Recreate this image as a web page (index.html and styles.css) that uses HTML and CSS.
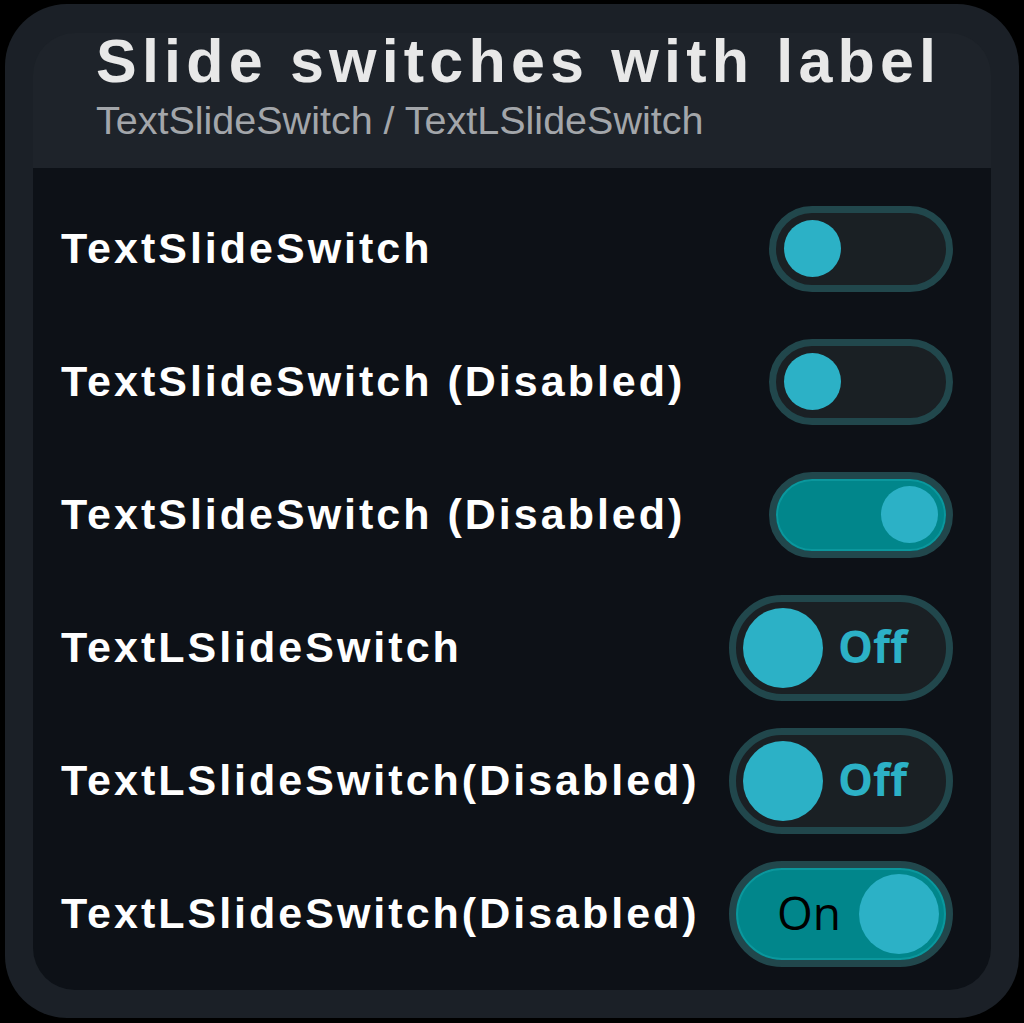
FILE: index.html
```html
<!DOCTYPE html>
<html lang="en">
<head>
<meta charset="utf-8">
<title>Slide switches with label</title>
<link rel="stylesheet" href="styles.css">
</head>
<body>
<div class="card">
  <div class="panel">
    <header class="header">
      <h1 class="title">Slide switches with label</h1>
      <p class="subtitle">TextSlideSwitch / TextLSlideSwitch</p>
    </header>
    <main class="body">
      <div class="row">
        <span class="label">TextSlideSwitch</span>
        <span class="sw sw-small"><span class="knob"></span></span>
      </div>
      <div class="row">
        <span class="label">TextSlideSwitch (Disabled)</span>
        <span class="sw sw-small"><span class="knob"></span></span>
      </div>
      <div class="row">
        <span class="label">TextSlideSwitch (Disabled)</span>
        <span class="sw sw-small on"><span class="knob"></span></span>
      </div>
      <div class="row">
        <span class="label">TextLSlideSwitch</span>
        <span class="sw sw-large"><span class="knob"></span><span class="state">Off</span></span>
      </div>
      <div class="row">
        <span class="label">TextLSlideSwitch(Disabled)</span>
        <span class="sw sw-large"><span class="knob"></span><span class="state">Off</span></span>
      </div>
      <div class="row">
        <span class="label">TextLSlideSwitch(Disabled)</span>
        <span class="sw sw-large on"><span class="state">On</span><span class="knob"></span></span>
      </div>
    </main>
  </div>
</div>
</body>
</html>
```

FILE: styles.css
```css
html, body {
  margin: 0;
  padding: 0;
  background: #000;
}
body {
  width: 1024px;
  height: 1023px;
  padding: 4px 5px;
  box-sizing: border-box;
  font-family: "Liberation Sans", Arial, sans-serif;
}
.card {
  width: 1014px;
  height: 1014px;
  box-sizing: border-box;
  background: #1b2027;
  border-radius: 62px;
  padding: 29px 28px 28px 28px;
}
.panel {
  height: 100%;
  display: flex;
  flex-direction: column;
}
.header {
  background: #1e232a;
  border-radius: 42px 42px 0 0;
  height: 135px;
  box-sizing: border-box;
  padding: 4px 0 0 63px;
}
.title {
  margin: 0;
  font-size: 61px;
  font-weight: 700;
  letter-spacing: 5.2px;
  color: #e8e8e8;
  line-height: 48px;
  white-space: nowrap;
}
.subtitle {
  margin: 15px 0 0 0;
  font-size: 39.5px;
  line-height: 40px;
  color: #a3a6aa;
  white-space: nowrap;
}
.body {
  flex: 1;
  background: #0d1117;
  border-radius: 0 0 42px 42px;
  padding: 14px 38px 10px 28px;
  display: flex;
  flex-direction: column;
}
.row {
  height: 133px;
  display: flex;
  align-items: center;
  justify-content: space-between;
}
.label {
  font-size: 43px;
  font-weight: 700;
  letter-spacing: 3px;
  color: #ffffff;
  white-space: nowrap;
}
.sw {
  box-sizing: border-box;
  border: 7px solid #21474c;
  background: #1a2024;
  border-radius: 60px;
  display: flex;
  align-items: center;
  flex: none;
}
.sw .knob {
  background: #2cb1c6;
  border-radius: 50%;
  flex: none;
}
.sw-small {
  width: 184px;
  height: 86px;
  padding: 0 8px;
}
.sw-small .knob {
  width: 57px;
  height: 57px;
}
.sw-small.on {
  justify-content: flex-end;
  background: #01868b;
  box-shadow: inset 0 0 0 2px #0b979d;
}
.sw-large {
  width: 224px;
  height: 106px;
  padding: 0 7px;
  gap: 15px;
}
.sw-large .knob {
  width: 80px;
  height: 80px;
}
.sw-large .state {
  font-family: "Open Sans", "Noto Sans", sans-serif;
  font-weight: 700;
  font-size: 44px;
  color: #2cb1c6;
  line-height: 1;
  margin-top: -4px;
}
.sw-large.on {
  background: #01868b;
  box-shadow: inset 0 0 0 2px #0b979d;
  justify-content: flex-end;
  gap: 18px;
}
.sw-large.on .state {
  color: #000000;
  font-weight: 500;
  font-size: 46px;
}
```
